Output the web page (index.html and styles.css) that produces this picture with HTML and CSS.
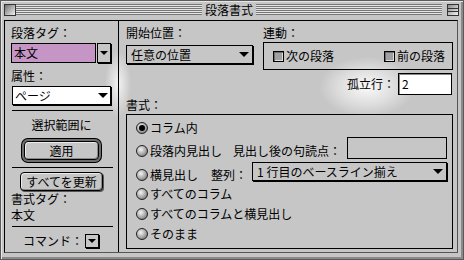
FILE: index.html
```html
<!DOCTYPE html>
<html lang="ja">
<head>
    <meta charset="UTF-8">
    <title>段落書式</title>
    <link rel="stylesheet" href="styles.css">
</head>
<body>
    <div class="window">
        <div class="glow glow-divider"></div>
        <div class="glow glow-orphan"></div>

        <div class="titlebar">
            <span class="closebox"></span>
            <span class="stripes"></span>
            <span class="title">段落書式</span>
            <span class="stripes"></span>
            <span class="zoombox"></span>
        </div>

        <div class="content">
            <div class="side">
                <div class="label">段落タグ：</div>
                <div class="tag-row">
                    <div class="tag-field">本文</div>
                    <div class="mini-pop tag-btn"><i class="arrow small"></i></div>
                </div>
                <div class="label attr-label">属性：</div>
                <div class="popup white attr-pop"><span>ページ</span><i class="arrow"></i></div>
                <div class="rule"></div>
                <div class="center-text">選択範囲に</div>
                <div class="default-wrap"><button class="btn btn-default">適用</button></div>
                <div class="rule rule-two"></div>
                <button class="btn btn-update">すべてを更新</button>
                <div class="tall">書式タグ：</div>
                <div class="tall">本文</div>
                <div class="rule rule-three"></div>
                <div class="command">コマンド：<span class="mini-pop cmd-btn"><i class="arrow small"></i></span></div>
            </div>

            <div class="main">
                <div class="top">
                    <div class="col-start">
                        <div class="label">開始位置：</div>
                        <div class="popup start-pop"><span>任意の位置</span><i class="arrow"></i></div>
                    </div>
                    <div class="col-link">
                        <div class="label">連動：</div>
                        <div class="linkbox">
                            <span class="check"><span class="box"></span>次の段落</span>
                            <span class="check"><span class="box"></span>前の段落</span>
                        </div>
                        <div class="orphan">
                            <span class="orphan-label">孤立行：</span>
                            <span class="field white orphan-field">2</span>
                        </div>
                    </div>
                </div>

                <div class="label format-label">書式：</div>
                <div class="format-box">
                    <div class="opt opt-1"><span class="radio on"></span><span class="opt-text">コラム内</span></div>
                    <div class="opt opt-2">
                        <span class="radio"></span><span class="opt-text">段落内見出し</span>
                        <span class="sub-label punct-label">見出し後の句読点：</span>
                        <span class="field punct-field"></span>
                    </div>
                    <div class="opt opt-3">
                        <span class="radio"></span><span class="opt-text">横見出し</span>
                        <span class="sub-label align-label">整列：</span>
                        <div class="popup align-pop"><span>1 行目のベースライン揃え</span><i class="arrow"></i></div>
                    </div>
                    <div class="opt"><span class="radio"></span><span class="opt-text">すべてのコラム</span></div>
                    <div class="opt"><span class="radio"></span><span class="opt-text">すべてのコラムと横見出し</span></div>
                    <div class="opt"><span class="radio"></span><span class="opt-text">そのまま</span></div>
                </div>
            </div>
        </div>
    </div>
</body>
</html>
```

FILE: styles.css
```css
* {
    box-sizing: border-box;
}
body {
    margin: 0;
    background: #c6c6c6;
    font-family: "Noto Sans CJK JP", "Noto Sans", sans-serif;
    font-size: 12px;
    color: #000;
}
.window {
    position: relative;
    width: 464px;
    height: 260px;
    background: #c6c6c6;
    border: 1px solid #5a5a5a;
    box-shadow: inset 1px 1px 0 #e6e6e6, inset -2px -2px 0 #8a8a8a;
    padding: 0 5px 6px 3px;
    display: flex;
    flex-direction: column;
}

/* soft light patches from the screen */
.glow {
    position: absolute;
    z-index: 0;
    pointer-events: none;
}
.glow-divider {
    left: 104px;
    top: 50px;
    width: 26px;
    height: 66px;
    background: radial-gradient(closest-side, rgba(255, 255, 255, 0.8), rgba(255, 255, 255, 0));
}
.glow-orphan {
    left: 318px;
    top: 56px;
    width: 96px;
    height: 60px;
    background: radial-gradient(closest-side, rgba(255, 255, 255, 0.9), rgba(255, 255, 255, 0.4) 60%, rgba(255, 255, 255, 0));
}

/* title bar */
.titlebar {
    position: relative;
    z-index: 1;
    height: 19px;
    display: flex;
    align-items: flex-start;
    padding-top: 3px;
    margin-right: -1px;
}
.closebox, .zoombox {
    width: 12px;
    height: 12px;
    flex: none;
    border: 1px solid #333;
    background: linear-gradient(135deg, #6e6e6e, #f2f2f2);
}
.zoombox {
    margin-left: 5px;
    background:
        linear-gradient(#333, #333) 0 3px / 100% 1px no-repeat,
        linear-gradient(#333, #333) 0 6px / 100% 1px no-repeat,
        linear-gradient(135deg, #8a8a8a, #f2f2f2);
}
.stripes {
    flex: 1;
    height: 11px;
    background: repeating-linear-gradient(#777 0 1px, #e4e4e4 1px 2px);
}
.stripes:first-of-type {
    margin-left: 6px;
}
.title {
    padding: 0 3px 0 3px;
    line-height: 12px;
    margin-top: 0;
}

/* content */
.content {
    position: relative;
    z-index: 1;
    flex: 1;
    display: flex;
    border: 1px solid #000;
    border-right-color: #555;
    border-bottom-color: #555;
}
.label {
    line-height: 14px;
    height: 14px;
}
.arrow {
    width: 0;
    height: 0;
    border-top: 5px solid #000;
    border-left: 5px solid transparent;
    border-right: 5px solid transparent;
}
.arrow.small {
    border-width: 4px 4px 0;
}
.popup {
    display: flex;
    align-items: center;
    justify-content: space-between;
    height: 19px;
    border: 1px solid #000;
    box-shadow: 1px 1px 0 #000;
    padding: 0 3px 0 4px;
    line-height: 14px;
}
.white {
    background: #fff;
}
.mini-pop {
    display: flex;
    align-items: center;
    justify-content: center;
    border: 1px solid #000;
    box-shadow: 1px 1px 0 #000;
}
.field {
    border: 1px solid #000;
    line-height: 14px;
}

/* left side */
.side {
    width: 113px;
    flex: none;
    padding: 5px 0 0 6px;
}
.tag-row {
    display: flex;
    height: 21px;
    margin-top: 3px;
}
.tag-field {
    width: 85px;
    height: 20px;
    border: 1px solid #000;
    background: #c595c5;
    padding-left: 2px;
    line-height: 18px;
}
.tag-btn {
    width: 14px;
    height: 20px;
    margin-left: 1px;
}
.attr-label {
    margin-top: 5px;
}
.attr-pop {
    width: 99px;
    margin: 3px 0 0 1px;
    padding-left: 2px;
    padding-right: 2px;
}
.rule {
    width: 101px;
    height: 1px;
    margin: 5px 0 0 1px;
    background: #000;
}
.center-text {
    margin: 7px 0 0 -6px;
    line-height: 14px;
    text-align: center;
}
.default-wrap {
    margin: 6px 0 0 10px;
    padding: 3px;
    width: 81px;
}
.btn {
    display: block;
    font: inherit;
    color: #000;
    padding: 0;
    height: 19px;
    line-height: 16px;
    border: 1px solid #000;
    border-radius: 4px;
    background: #c6c6c6;
    box-shadow: inset 1px 1px 0 #ececec, inset -1px -1px 0 #8a8a8a;
}
.btn-default {
    width: 75px;
    box-shadow: inset 1px 1px 0 #ececec, inset -1px -1px 0 #8a8a8a, 0 0 0 2px #6e6e6e, 0 0 0 3px #000;
}
.rule-two {
    margin-top: 4px;
}
.btn-update {
    width: 83px;
    margin: 4px 0 0 9px;
    box-shadow: inset 1px 1px 0 #ececec, inset -1px -1px 0 #8a8a8a, 1px 1px 0 #555;
}
.tall {
    line-height: 16px;
}
.rule-three {
    margin-top: 3px;
}
.command {
    display: flex;
    align-items: center;
    height: 15px;
    margin-top: 6px;
    padding-left: 12px;
    line-height: 14px;
}
.cmd-btn {
    width: 14px;
    height: 14px;
    margin-left: 2px;
}

/* right side */
.main {
    flex: 1;
    border-left: 1px solid #000;
    padding: 5px 4px 0 7px;
}
.top {
    display: flex;
}
.col-start {
    width: 137px;
    flex: none;
}
.start-pop {
    width: 127px;
    margin-top: 5px;
}
.col-link {
    width: 190px;
    flex: none;
}
.linkbox {
    height: 28px;
    margin-top: 2px;
    border: 1px solid #000;
    display: flex;
    align-items: center;
    justify-content: space-between;
    padding: 0 7px 0 9px;
}
.check {
    display: flex;
    align-items: center;
    line-height: 14px;
}
.box {
    width: 11px;
    height: 11px;
    margin-right: 2px;
    border: 1px solid #000;
    background: #a0a0a0;
    box-shadow: inset 1px 1px 0 #6c6c6c, inset -1px -1px 0 #dedede;
}
.orphan {
    display: flex;
    justify-content: flex-end;
    align-items: center;
    margin-top: 3px;
}
.orphan-label {
    line-height: 14px;
}
.orphan-field {
    width: 54px;
    height: 22px;
    margin: 0 1px 0 3px;
    padding: 3px 0 0 3px;
    box-shadow: inset 1px 1px 0 #888;
}
.format-label {
    margin-top: 3px;
}
.format-box {
    height: 135px;
    margin-top: 2px;
    border: 1px solid #000;
    padding-left: 9px;
}
.opt {
    display: flex;
    align-items: center;
    height: 20px;
    line-height: 14px;
}
.opt-1 {
    margin-top: 3px;
}
.opt-2 {
    height: 22px;
    margin-top: 2px;
}
.opt-3 {
    height: 19px;
    margin-top: 3px;
}
.radio {
    position: relative;
    width: 12px;
    height: 12px;
    flex: none;
    border: 1px solid #222;
    border-radius: 50%;
    background: radial-gradient(circle at 38% 35%, #f4f4f4 0, #b4b4b4 45%, #626262 100%);
}
.radio.on::after {
    content: "";
    position: absolute;
    left: 2px;
    top: 2px;
    width: 6px;
    height: 6px;
    border-radius: 50%;
    background: #000;
}
.opt-text {
    margin-left: 2px;
}
.punct-label {
    margin-left: 11px;
}
.punct-field {
    width: 100px;
    height: 22px;
    margin: 0 0 6px 6px;
}
.align-label {
    margin-left: 13px;
}
.align-pop {
    width: 195px;
    margin: 0 0 6px 5px;
}
```
